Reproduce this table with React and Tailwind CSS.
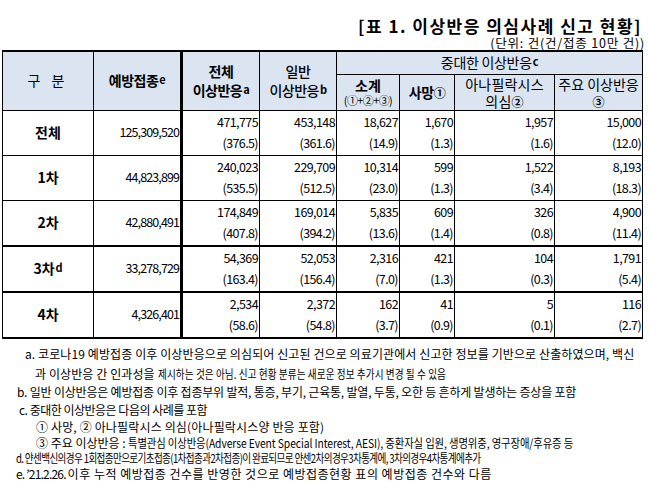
import React from "react";

const KR = { fontFamily: '"Noto Sans CJK KR", "Noto Sans", sans-serif' };

const ROWS = [
  { label: "전체", total: "125,309,520", h: "h-[44px]", cells: [["471,775", "(376.5)"], ["453,148", "(361.6)"], ["18,627", "(14.9)"], ["1,670", "(1.3)"], ["1,957", "(1.6)"], ["15,000", "(12.0)"]] },
  { label: "1차", total: "44,823,899", h: "h-[44px]", cells: [["240,023", "(535.5)"], ["229,709", "(512.5)"], ["10,314", "(23.0)"], ["599", "(1.3)"], ["1,522", "(3.4)"], ["8,193", "(18.3)"]] },
  { label: "2차", total: "42,880,491", h: "h-[43px]", cells: [["174,849", "(407.8)"], ["169,014", "(394.2)"], ["5,835", "(13.6)"], ["609", "(1.4)"], ["326", "(0.8)"], ["4,900", "(11.4)"]] },
  { label: "3차", sup: "d", total: "33,278,729", h: "h-[44px]", thick: true, cells: [["54,369", "(163.4)"], ["52,053", "(156.4)"], ["2,316", "(7.0)"], ["421", "(1.3)"], ["104", "(0.3)"], ["1,791", "(5.4)"]] },
  { label: "4차", total: "4,326,401", h: "h-[42px]", thick: true, cells: [["2,534", "(58.6)"], ["2,372", "(54.8)"], ["162", "(3.7)"], ["41", "(0.9)"], ["5", "(0.1)"], ["116", "(2.7)"]] },
];

function Sup({ children }) {
  return <sup className="text-[11px] leading-none font-bold relative -top-[2px] ml-[1px]">{children}</sup>;
}

export default function App() {
  return (
    <div className="w-[649px] h-[484px] bg-white text-black overflow-hidden" style={KR}>
      {/* title */}
      <div className="flex flex-col items-end pr-[8px] pt-[16px]">
        <p className="text-[17px] font-bold leading-[20px] tracking-[1.5px] -mr-[1px] whitespace-nowrap">
          [표 1. 이상반응 의심사례 신고 현황]
        </p>
        <p className="text-[12.5px] leading-[13px] tracking-[0.8px] -mr-[4px] whitespace-nowrap">
          (단위: 건(건/접종 10만 건))
        </p>
      </div>

      {/* table */}
      <table className="ml-[2px] mt-[1px] table-fixed border-collapse border-t-2 border-b-2 border-x border-black w-[640px]">
        <colgroup>
          <col className="w-[91px]" />
          <col className="w-[88px]" />
          <col className="w-[78px]" />
          <col className="w-[77px]" />
          <col className="w-[63px]" />
          <col className="w-[55px]" />
          <col className="w-[100px]" />
          <col className="w-[88px]" />
        </colgroup>
        <thead>
          <tr className="h-[23px] bg-[#dbe5f1] text-[14px] leading-[17px]">
            <th rowSpan={2} className="border border-black font-normal tracking-[4px]">구 분</th>
            <th rowSpan={2} className="border border-black border-r-[3px] font-bold whitespace-nowrap tracking-[-0.5px]">
              예방접종<Sup>e</Sup>
            </th>
            <th rowSpan={2} className="border border-black font-bold whitespace-nowrap tracking-[-0.5px]">
              <div className="leading-[19px]">전체</div>
              <div className="leading-[19px]">이상반응<Sup>a</Sup></div>
            </th>
            <th rowSpan={2} className="border border-black font-medium whitespace-nowrap tracking-[-0.5px]">
              <div className="leading-[19px]">일반</div>
              <div className="leading-[19px]">이상반응<Sup>b</Sup></div>
            </th>
            <th colSpan={4} className="border border-black font-normal tracking-[-0.3px]">
              중대한 이상반응<Sup>c</Sup>
            </th>
          </tr>
          <tr className="h-[36px] bg-[#dbe5f1] text-[14px] leading-[16px]">
            <th className="border border-black font-bold">
              <div>소계</div>
              <div className="text-[11px] leading-[14px] font-normal tracking-[-0.6px] whitespace-nowrap">(①+②+③)</div>
            </th>
            <th className="border border-black font-bold whitespace-nowrap tracking-[-0.5px]">
              사망<span className="text-[12px] font-bold">①</span>
            </th>
            <th className="border border-black font-normal whitespace-nowrap tracking-[0.2px] align-top">
              <div className="leading-[18px]">아나필락시스</div>
              <div className="leading-[17px]">의심<span className="text-[12px] font-bold">②</span></div>
            </th>
            <th className="border border-black font-normal whitespace-nowrap tracking-[0px] align-top">
              <div className="leading-[18px]">주요 이상반응</div>
              <div className="leading-[17px] text-[12px] font-bold">③</div>
            </th>
          </tr>
        </thead>
        <tbody>
          {ROWS.map((r) => (
            <tr key={r.label} className={r.h}>
              <td className={`border-x border-b border-black text-center text-[14px] font-bold ${r.thick ? "border-t-2" : "border-t"}`}>
                {r.label}
                {r.sup && <Sup>{r.sup}</Sup>}
              </td>
              <td
                className={`border-x border-b border-black border-r-[3px] text-right pr-[1px] text-[12.5px] tracking-[-0.9px] ${r.thick ? "border-t-2" : "border-t"}`}
              >
                {r.total}
              </td>
              {r.cells.map(([a, b], i) => (
                <td
                  key={i}
                  className={`border-x border-b border-black text-right pr-[1px] align-top text-[12.5px] tracking-[-0.6px] ${r.thick ? "border-t-2" : "border-t"}`}
                >
                  <div className="leading-[18px] pt-[2px]">{a}</div>
                  <div className="leading-[24px]">{b}</div>
                </td>
              ))}
            </tr>
          ))}
        </tbody>
      </table>

      {/* footnotes */}
      <div className="mt-[5px] text-[12px] whitespace-nowrap">
        <div className="h-[20px] leading-[20px] pl-[25px] tracking-[0.1px]">
          a. 코로나19 예방접종 이후 이상반응으로 의심되어 신고된 건으로 의료기관에서 신고한 정보를 기반으로 산출하였으며, 백신
        </div>
        <div className="h-[19px] leading-[19px] pl-[35px] tracking-[0.1px] flex">
          <span>과 이상반응 간 인과성을&nbsp;</span>
          <span className="inline-block origin-left scale-x-[0.8]">
            제시하는 것은 아님. 신고 현황 분류는 새로운 정보 추가시 변경 될 수 있음
          </span>
        </div>
        <div className="h-[18px] leading-[18px] pl-[17px] tracking-[-0.2px]">
          b. 일반 이상반응은 예방접종 이후 접종부위 발적, 통증, 부기, 근육통, 발열, 두통, 오한 등 흔하게 발생하는 증상을 포함
        </div>
        <div className="h-[17px] leading-[17px] pl-[19px] tracking-[-0.5px]">c. 중대한 이상반응은 다음의 사례를 포함</div>
        <div className="h-[17px] leading-[17px] pl-[36px] tracking-[0.15px]">① 사망, ② 아나필락시스 의심(아나필락시스양 반응 포함)</div>
        <div className="h-[16px] leading-[16px] pl-[36px] flex">
          <span className="tracking-[0px]">③ 주요 이상반응 :&nbsp;</span>
          <span className="inline-block origin-left scale-x-[0.86] tracking-[-0.1px]">
            특별관심 이상반응(Adverse Event Special Interest, AESI), 중환자실 입원, 생명위중, 영구장애/후유증 등
          </span>
        </div>
        <div className="h-[14px] leading-[14px] pl-[16px]">
          <span className="inline-block origin-left scale-x-[0.8] tracking-[-0.8px]">
            d. 얀센백신의경우 1회접종만으로기초접종(1차접종과2차접종)이 완료되므로 얀센2차의경우3차통계에, 3차의경우4차통계에추가
          </span>
        </div>
        <div className="h-[18px] leading-[18px] pl-[16px] flex">
          <span className="tracking-[-0.8px]">e. ’21.2.26.&nbsp;</span>
          <span className="tracking-[0.5px]">이후 누적 예방접종 건수를 반영한 것으로 예방접종현황 표의 예방접종 건수와 다름</span>
        </div>
      </div>
    </div>
  );
}
